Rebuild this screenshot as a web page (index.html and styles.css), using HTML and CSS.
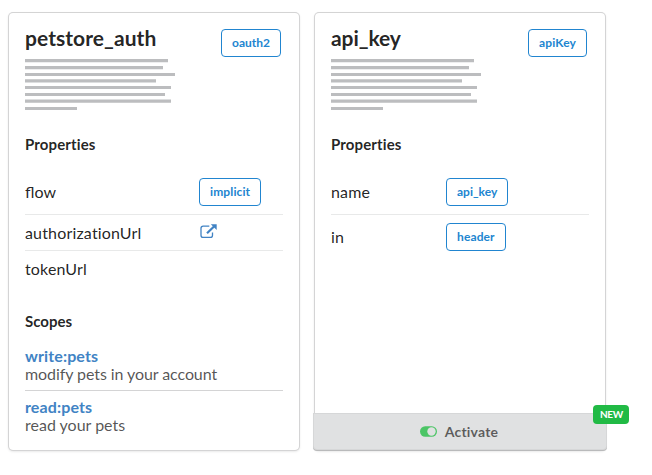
FILE: index.html
```html
<!DOCTYPE html>
<html lang="en">
<head>
<meta charset="utf-8">
<title>Security schemes</title>
<link rel="stylesheet" href="styles.css">
</head>
<body>
<div class="cards">
  <section class="card">
    <header class="head"><h2 class="title">petstore_auth</h2><span class="label">oauth2</span></header>
    <svg class="paragraph" width="150" height="52" viewBox="0 0 150 52" fill="#bcbdbf">
      <path d="M0 0h143v3.3H0zM0 7h138v3.2H0zM0 13.9h150v3H0zM0 20.2h131v3.3H0zM0 27h146v3H0zM0 33.9h140v3H0zM0 40.6h146v3.1H0zM0 47.9h52v3.1H0z"/>
    </svg>
    <h3 class="subtitle">Properties</h3>
    <dl class="props">
      <div class="row tall"><dt class="joined">flow</dt><dd><span class="label wide">implicit</span></dd></div>
      <div class="row"><dt>authorizationUrl</dt><dd>
        <svg class="external" width="17" height="15" viewBox="0 0 17 15" fill="none" stroke="#4183c4">
          <path d="M9.3 2.1H3.2Q1 2.1 1 4.3v6.9q0 2.2 2.2 2.2h7.1q2.2 0 2.2-2.2V8.4" stroke-width="1.3"/>
          <path d="M7 9.3 14 2.5" stroke-width="2.2"/>
          <path d="M10.8.2h5.9v5.9z" fill="#4183c4" stroke="none"/>
        </svg></dd></div>
      <div class="row"><dt>tokenUrl</dt><dd></dd></div>
    </dl>
    <h3 class="subtitle scopes-title">Scopes</h3>
    <div class="scopes">
      <div class="scope"><a class="scope-name">write:pets</a><p class="scope-text">modify pets in your account</p></div>
      <div class="scope"><a class="scope-name">read:pets</a><p class="scope-text">read your pets</p></div>
    </div>
  </section>
  <section class="card">
    <header class="head"><h2 class="title compact">api_key</h2><span class="label wide">apiKey</span></header>
    <svg class="paragraph" width="150" height="52" viewBox="0 0 150 52" fill="#bcbdbf">
      <path d="M0 0h143v3.3H0zM0 7h138v3.2H0zM0 13.9h150v3H0zM0 20.2h131v3.3H0zM0 27h146v3H0zM0 33.9h140v3H0zM0 40.6h146v3.1H0zM0 47.9h52v3.1H0z"/>
    </svg>
    <h3 class="subtitle">Properties</h3>
    <dl class="props short-values">
      <div class="row tall"><dt>name</dt><dd><span class="label">api_key</span></dd></div>
      <div class="row tall"><dt>in</dt><dd><span class="label wide">header</span></dd></div>
    </dl>
    <button class="activate" type="button">
      <svg class="toggle" width="17" height="11" viewBox="0 0 17 11">
        <rect width="17" height="10.4" y=".3" rx="5.2" fill="#4cc566"/>
        <circle cx="11.5" cy="5.5" r="4.2" fill="#e0e1e2"/>
      </svg>Activate<span class="badge">NEW</span>
    </button>
  </section>
</div>
</body>
</html>
```

FILE: styles.css
```css
* { box-sizing: border-box; }
body {
  min-height: 475px;
  margin: 0;
  background: #fff;
  color: rgba(0, 0, 0, .87);
  font: 16px/18px Lato, sans-serif;
  font-variant-ligatures: none;
}
h2, h3, p, dl, dd { margin: 0; }
.cards {
  display: flex;
  gap: 16px;
  padding: 13px 0 0 9px;
}
.card {
  display: flex;
  flex-direction: column;
  width: 290px;
  height: 437px;
  padding: 16px 16px 0;
  border-radius: 4px;
  box-shadow: 0 1px 3px 0 #d4d4d5, 0 0 0 1px #d4d4d5;
}
.head {
  display: flex;
  justify-content: space-between;
  height: 30px;
  padding-right: 2px;
}
.title {
  margin-top: -4px;
  font-size: 21px;
  line-height: 26px;
  font-weight: 700;
  letter-spacing: .06px;
}
.title.compact { letter-spacing: -.08px; }
.label {
  display: inline-block;
  height: 28px;
  padding: 7px 10px;
  border: 1px solid #2185d0;
  border-radius: 4px;
  color: #2185d0;
  font-size: 12px;
  line-height: 12px;
  font-weight: 700;
}
.label.wide { letter-spacing: .12px; }
.paragraph { display: block; flex: none; }
.subtitle {
  margin-top: 24px;
  font-size: 15px;
  line-height: 18px;
  font-weight: 700;
  letter-spacing: .12px;
}
.props {
  --value-column: 84px;
  margin-top: 17px;
}
.short-values { --value-column: 143px; }
.row {
  display: grid;
  grid-template-columns: 1fr var(--value-column);
  align-items: center;
  height: 36px;
}
.row + .row { border-top: 1px solid rgba(34, 36, 38, .1); }
.row.tall { height: 44px; }
.row.tall + .row.tall { height: 45px; }
dt { letter-spacing: .17px; }
.joined { font-variant-ligatures: normal; letter-spacing: 0; }
dd { display: flex; }
.external { margin: -3px 0 0 1px; }
.scopes-title { margin-top: 26px; letter-spacing: 0; }
.scopes { margin-top: 17px; }
.scope + .scope {
  margin-top: 7px;
  padding-top: 7px;
  border-top: 1px solid #d4d4d5;
}
.scope-name {
  display: block;
  color: #4183c4;
  font-weight: 700;
  letter-spacing: .12px;
}
.scope-text { color: rgba(0, 0, 0, .68); letter-spacing: -.08px; }
.scope + .scope .scope-text { letter-spacing: 0; }
.activate {
  position: relative;
  display: flex;
  align-items: center;
  justify-content: center;
  height: 37px;
  margin: auto -18px 0;
  padding: 0 2px 0 0;
  border: 0;
  border-radius: 0 0 4px 4px;
  background: #e0e1e2;
  color: rgba(0, 0, 0, .6);
  font: 700 14px/14px Lato, sans-serif;
  font-variant-ligatures: none;
  letter-spacing: .22px;
  box-shadow: inset 0 0 0 1px rgba(34, 36, 38, .05), 0 1px 0 #b9babb;
}
.toggle { margin-right: 8px; }
.badge {
  position: absolute;
  top: -8px;
  right: -22px;
  width: 36px;
  padding: 4px 0 4px 7px;
  border-radius: 4px;
  background: #21ba45;
  color: #fff;
  font-size: 10px;
  line-height: 11px;
  text-align: left;
  letter-spacing: -.4px;
}
```
